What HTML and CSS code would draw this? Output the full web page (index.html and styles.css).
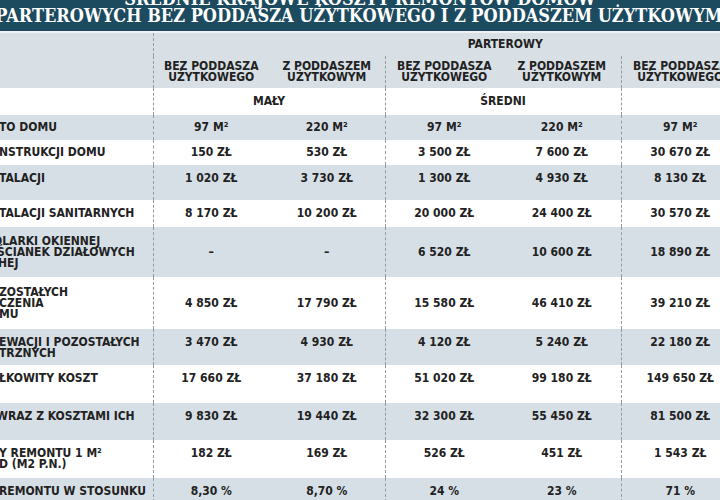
FILE: index.html
```html
<!DOCTYPE html>
<html lang="pl">
<head>
<meta charset="utf-8">
<title>Średnie krajowe koszty remontów domów</title>
<link rel="stylesheet" href="styles.css">
</head>
<body>
<div class="sheet">
  <header class="banner">
    <div class="t1">ŚREDNIE KRAJOWE KOSZTY REMONTÓW DOMÓW</div>
    <div class="t2">PARTEROWYCH BEZ PODDASZA UŻYTKOWEGO I Z PODDASZEM UŻYTKOWYM</div>
  </header>
  <table class="grid">
    <colgroup>
      <col class="c-label"><col class="c-a"><col class="c-a"><col class="c-b"><col class="c-b"><col class="c-c"><col class="c-c">
    </colgroup>
    <thead>
      <tr class="hd h23">
        <th class="lbl"></th>
        <th colspan="6" class="val">PARTEROWY</th>
      </tr>
      <tr class="hd h32">
        <th class="lbl"></th>
        <th class="val">BEZ PODDASZA<br>UŻYTKOWEGO</th>
        <th class="val">Z PODDASZEM<br>UŻYTKOWYM</th>
        <th class="val sep">BEZ PODDASZA<br>UŻYTKOWEGO</th>
        <th class="val">Z PODDASZEM<br>UŻYTKOWYM</th>
        <th class="val sep">BEZ PODDASZA<br>UŻYTKOWEGO</th>
        <th class="val"></th>
      </tr>
      <tr class="wh h27">
        <th class="lbl"></th>
        <th colspan="2" class="val">MAŁY</th>
        <th colspan="2" class="val sep">ŚREDNI</th>
        <th colspan="2" class="val sep"></th>
      </tr>
    </thead>
    <tbody>
      <tr class="gr h25">
        <td class="lbl"><span class="ln">TO DOMU</span></td>
        <td class="val">97 M²</td><td class="val">220 M²</td>
        <td class="val sep">97 M²</td><td class="val">220 M²</td>
        <td class="val sep">97 M²</td><td class="val"></td>
      </tr>
      <tr class="wh h25">
        <td class="lbl"><span class="ln">NSTRUKCJI DOMU</span></td>
        <td class="val">150 ZŁ</td><td class="val">530 ZŁ</td>
        <td class="val sep">3 500 ZŁ</td><td class="val">7 600 ZŁ</td>
        <td class="val sep">30 670 ZŁ</td><td class="val"></td>
      </tr>
      <tr class="gr h35 top">
        <td class="lbl"><span class="ln">TALACJI</span></td>
        <td class="val">1 020 ZŁ</td><td class="val">3 730 ZŁ</td>
        <td class="val sep">1 300 ZŁ</td><td class="val">4 930 ZŁ</td>
        <td class="val sep">8 130 ZŁ</td><td class="val"></td>
      </tr>
      <tr class="wh h27">
        <td class="lbl"><span class="ln">TALACJI SANITARNYCH</span></td>
        <td class="val">8 170 ZŁ</td><td class="val">10 200 ZŁ</td>
        <td class="val sep">20 000 ZŁ</td><td class="val">24 400 ZŁ</td>
        <td class="val sep">30 570 ZŁ</td><td class="val"></td>
      </tr>
      <tr class="gr h50">
        <td class="lbl"><span class="ln cut6">OLARKI OKIENNEJ</span><span class="ln cut2">ŚCIANEK DZIAŁOWYCH</span><span class="ln cut1">HEJ</span></td>
        <td class="val">–</td><td class="val">–</td>
        <td class="val sep">6 520 ZŁ</td><td class="val">10 600 ZŁ</td>
        <td class="val sep">18 890 ZŁ</td><td class="val"></td>
      </tr>
      <tr class="wh h52">
        <td class="lbl"><span class="ln">ZOSTAŁYCH</span><span class="ln">CZENIA</span><span class="ln">MU</span></td>
        <td class="val">4 850 ZŁ</td><td class="val">17 790 ZŁ</td>
        <td class="val sep">15 580 ZŁ</td><td class="val">46 410 ZŁ</td>
        <td class="val sep">39 210 ZŁ</td><td class="val"></td>
      </tr>
      <tr class="gr h36 top">
        <td class="lbl"><span class="ln">EWACJI I POZOSTAŁYCH</span><span class="ln">TRZNYCH</span></td>
        <td class="val">3 470 ZŁ</td><td class="val">4 930 ZŁ</td>
        <td class="val sep">4 120 ZŁ</td><td class="val">5 240 ZŁ</td>
        <td class="val sep">22 180 ZŁ</td><td class="val"></td>
      </tr>
      <tr class="wh h38 top">
        <td class="lbl"><span class="ln">ŁKOWITY KOSZT</span></td>
        <td class="val">17 660 ZŁ</td><td class="val">37 180 ZŁ</td>
        <td class="val sep">51 020 ZŁ</td><td class="val">99 180 ZŁ</td>
        <td class="val sep">149 650 ZŁ</td><td class="val"></td>
      </tr>
      <tr class="gr h37 top">
        <td class="lbl"><span class="ln cut4">WRAZ Z KOSZTAMI ICH</span></td>
        <td class="val">9 830 ZŁ</td><td class="val">19 440 ZŁ</td>
        <td class="val sep">32 300 ZŁ</td><td class="val">55 450 ZŁ</td>
        <td class="val sep">81 500 ZŁ</td><td class="val"></td>
      </tr>
      <tr class="wh h38 top">
        <td class="lbl"><span class="ln">Y REMONTU 1 M²</span><span class="ln">D (M2 P.N.)</span></td>
        <td class="val">182 ZŁ</td><td class="val">169 ZŁ</td>
        <td class="val sep">526 ZŁ</td><td class="val">451 ZŁ</td>
        <td class="val sep">1 543 ZŁ</td><td class="val"></td>
      </tr>
      <tr class="gr h40 top">
        <td class="lbl"><span class="ln">REMONTU W STOSUNKU</span></td>
        <td class="val">8,30 %</td><td class="val">8,70 %</td>
        <td class="val sep">24 %</td><td class="val">23 %</td>
        <td class="val sep">71 %</td><td class="val"></td>
      </tr>
    </tbody>
  </table>
</div>
</body>
</html>
```

FILE: styles.css
```css
html, body {
  margin: 0;
  padding: 0;
  background: #ffffff;
  overflow: hidden;
}

.sheet {
  width: 720px;
  height: 500px;
  overflow: hidden;
}

.banner {
  width: 720px;
  height: 31px;
  background: #1c4a5e;
  border-bottom: 2px solid #eef2f5;
  color: #ffffff;
  display: flex;
  flex-direction: column;
  align-items: center;
  overflow: hidden;
  font-family: "DejaVu Serif Condensed", "DejaVu Serif", "Liberation Serif", serif;
  font-stretch: condensed;
  font-weight: bold;
  font-size: 18px;
  line-height: 17px;
  white-space: nowrap;
}

.t1 {
  margin-top: -10px;
}

.t2 {
  margin-left: -2px;
}

.grid {
  width: 857px;
  table-layout: fixed;
  border-collapse: collapse;
  font-family: "DejaVu Sans Condensed", "DejaVu Sans", "Liberation Sans", sans-serif;
  font-stretch: condensed;
  font-weight: bold;
  font-size: 12px;
  line-height: 11px;
  color: #222222;
}

.c-label { width: 153px; }
.c-a { width: 116px; }
.c-b { width: 118px; }
.c-c { width: 118px; }

.grid th,
.grid td {
  padding: 0;
  font-weight: bold;
  white-space: nowrap;
  vertical-align: middle;
}

.hd { background: #d8e0e6; }
.gr { background: #d7dfe6; }
.wh { background: #ffffff; }

.h23 { height: 23px; }
.h25 { height: 25px; }
.h27 { height: 27px; }
.h32 { height: 32px; }
.h35 { height: 35px; }
.h36 { height: 36px; }
.h37 { height: 37px; }
.h38 { height: 38px; }
.h40 { height: 40px; }
.h50 { height: 50px; }
.h52 { height: 52px; }

.top td { vertical-align: top; padding-top: 8px; }

.lbl {
  text-align: left;
  overflow: hidden;
  border-right: 1px dashed #8e9ca7;
}

.ln {
  display: block;
  margin-left: -1px;
}
.cut1 { margin-left: -2px; }
.cut2 { margin-left: -3px; }
.cut4 { margin-left: -4px; }
.cut6 { margin-left: -7px; }

.val {
  text-align: center;
}

.sep {
  border-left: 1px dashed #8e9ca7;
}
```
